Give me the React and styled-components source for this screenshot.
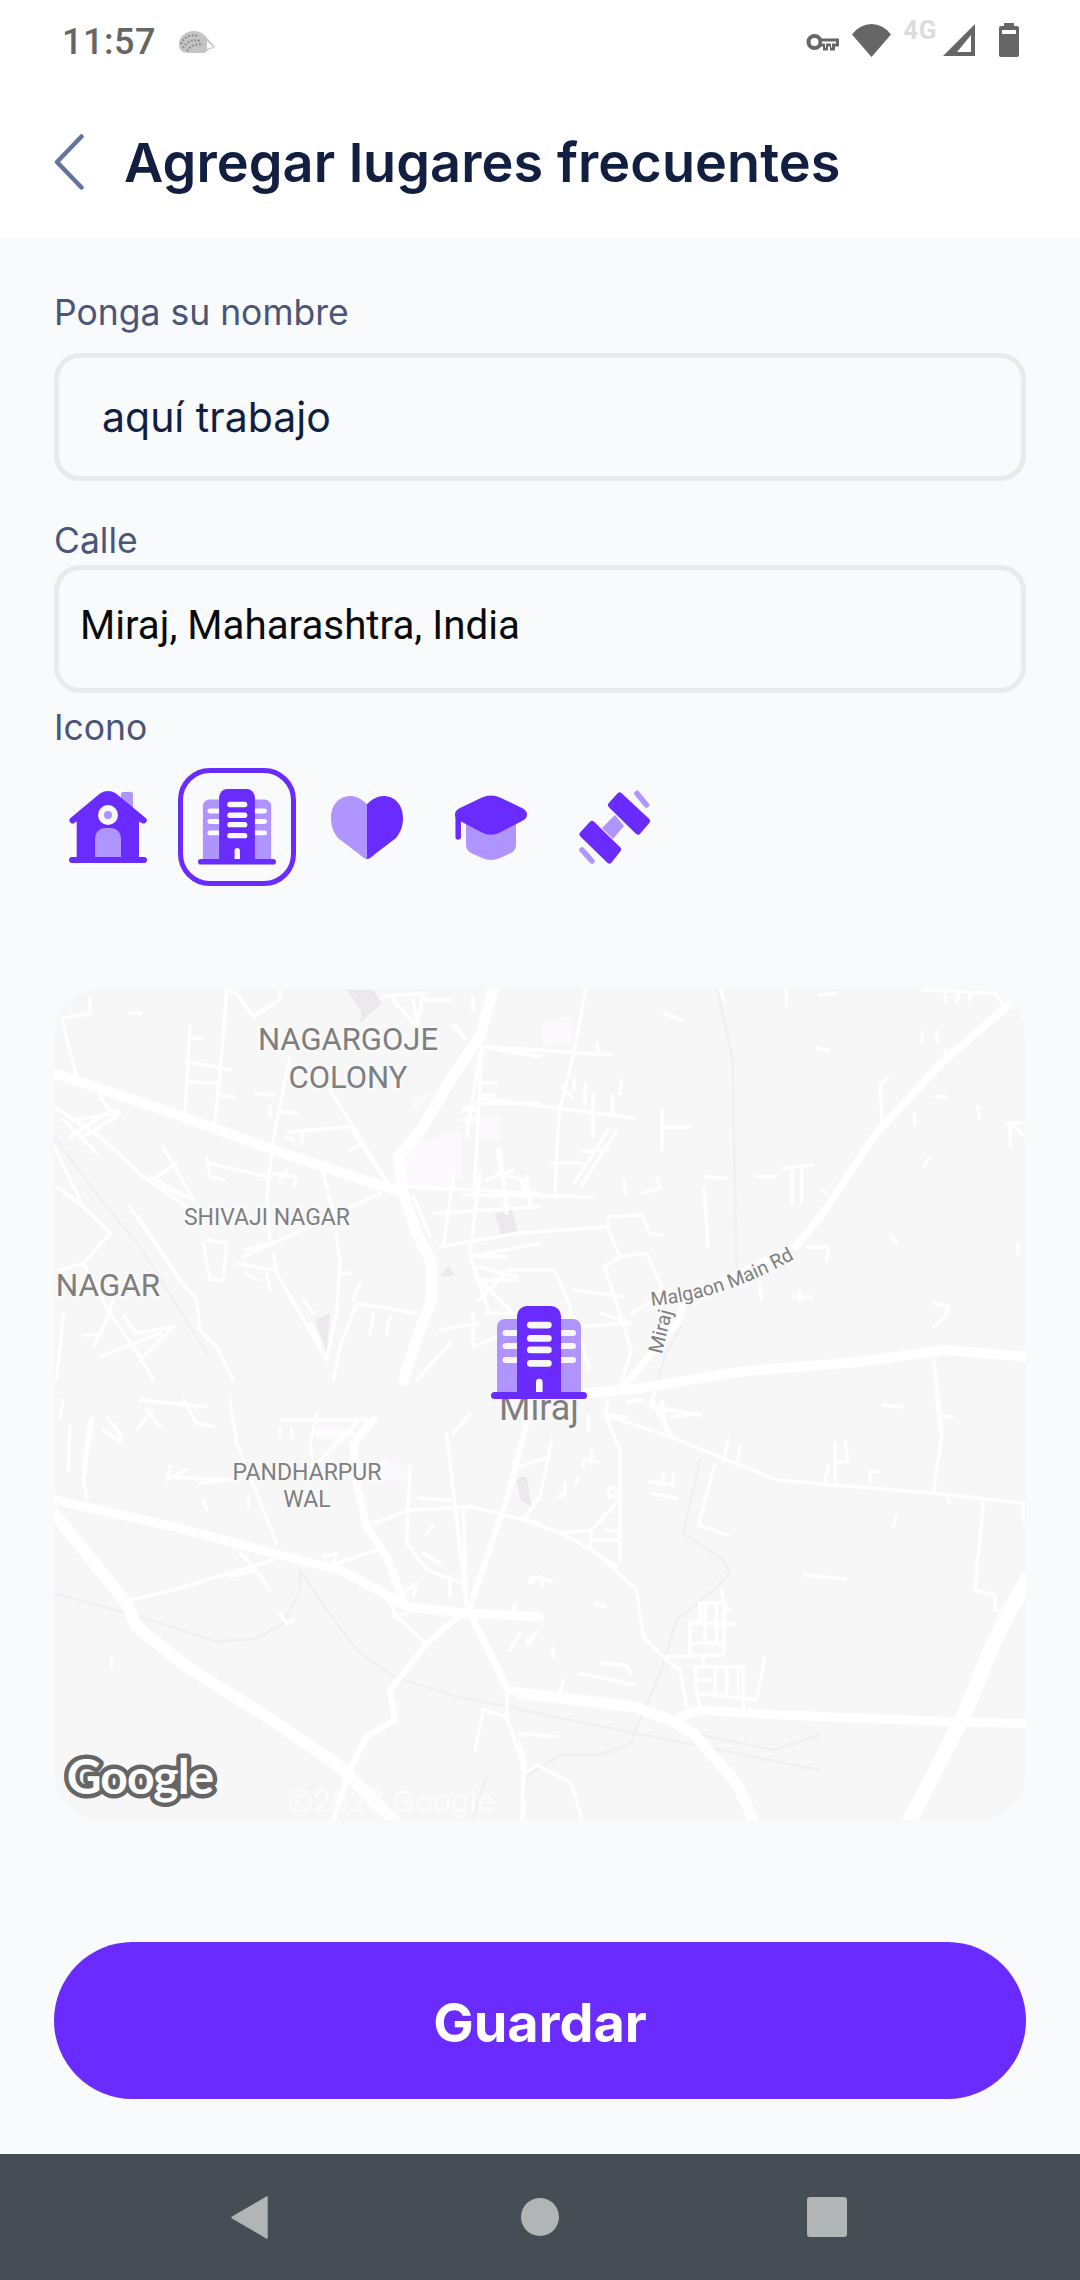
import React from "react";
import styled, { createGlobalStyle } from "styled-components";

const Global = createGlobalStyle`
  html, body { margin: 0; padding: 0; background: #f8fafc; }
  * { box-sizing: border-box; }
`;

const PURPLE = "#6a2bff";
const LIGHT = "#b094ff";
const WIN = "#f8fafc";

const Page = styled.div`
  width: 1080px; height: 2280px; display: flex; flex-direction: column; background: #f8fafc; overflow: hidden;
  font-family: Inter, "Noto Sans", sans-serif;
`;
const StatusBar = styled.div`
  height: 84px; background: #fff; display: flex; align-items: center; padding: 0 61px 0 62px; flex: none;
`;
const Time = styled.span`
  font: 500 36px Roboto, sans-serif; color: #666; width: 116px; letter-spacing: .5px;
`;
const StatusRight = styled.div`
  margin-left: auto; display: flex; align-items: center; padding-bottom: 4px;
`;
const Header = styled.header`
  height: 154px; flex: none; background: #fff; display: flex; align-items: center; padding: 2px 0 0 54px; gap: 40px;
`;
const Title = styled.h1`
  margin: 0; font: 600 54px Inter, sans-serif; color: #121f41; letter-spacing: .08px;
`;
const Body = styled.main`
  flex: 1; display: flex; flex-direction: column; padding: 54px 54px 55px;
`;
const Label = styled.label`
  display: block; font: 400 35.5px Inter, sans-serif; color: #4a5578; line-height: 42px;
  margin-top: ${p => p.$top || 0}px;
`;
const Field = styled.div`
  height: 128px; border: 5px solid #e8eaec; border-radius: 26px; display: flex; align-items: center;
  padding-left: ${p => p.$pad}px; padding-bottom: ${p => p.$road ? 8 : 0}px; margin-top: ${p => p.$top}px;
  font: ${p => p.$road ? '400 40.3px Roboto, sans-serif' : '400 41px Inter, sans-serif'};
  color: ${p => p.$road ? '#0a0a0a' : '#121f41'};
`;
const IconRow = styled.div`
  display: flex; align-items: center; margin-top: 19px; height: 118px; margin-left: -5px;
`;
const IconCell = styled.button`
  width: 118px; height: 118px; padding: 0; background: none; display: flex; align-items: center; justify-content: center;
  border: ${p => p.$on ? `5px solid ${PURPLE}` : '5px solid transparent'}; border-radius: 32px;
  margin-left: ${p => p.$left || 0}px;
`;
const MapFrame = styled.div`
  position: relative; height: 831px; margin-top: 103px; border-radius: 48px; overflow: hidden; background: #f7f7f8;
`;
const MapArt = styled.svg`
  display: block; width: 972px; height: 831px;
`;
const Pin = styled.div`
  position: absolute; left: 437px; top: 317px; display: flex;
`;
const SaveButton = styled.button`
  height: 157px; margin-top: 122px; border: 0; border-radius: 79px; background: ${PURPLE}; color: #fff;
  font: 700 54px Inter, sans-serif; flex: none; padding: 3px 0 0;
`;
const NavBar = styled.nav`
  height: 126px; flex: none; background: #464d54; display: flex; align-items: center; justify-content: center;
`;
const NavSlot = styled.div`
  width: 287px; display: flex; justify-content: center; padding-right: ${p => p.$shift || 0}px;
`;
const FourG = styled.span`
  font: 700 26px Roboto, sans-serif; color: #dcdcdc; align-self: flex-start; margin: -5px 6px 0 12px; line-height: 24px; letter-spacing: .5px;
`;
const Spacer = styled.div` width: ${p => p.$w}px; flex: none; `;

const Building = ({ w = 78, win = WIN }) => (
  <svg width={w} height={w * 93 / 96} viewBox="0 0 96 93">
    <path d="M6 87V21a8 8 0 0 1 8-8h68a8 8 0 0 1 8 8v66z" fill={LIGHT} />
    {[24, 37, 51].map(y => (
      <g key={y} fill={win}>
        <rect x="11.500" y={y} width="20" height="6" rx="3" />
        <rect x="65" y={y} width="20" height="6" rx="3" />
      </g>
    ))}
    <path d="M26 87V10A10 10 0 0 1 36 0h24a10 10 0 0 1 10 10v77z" fill={PURPLE} />
    {[15.7, 29, 40.5, 54].map(y => (
      <rect key={y} x="36" y={y} width="24.700" height="6.700" rx="3.300" fill={win} />
    ))}
    <path d="M45 86V76a3.300 3.300 0 0 1 6.600 0v10z" fill={win} />
    <rect x="0" y="86" width="96" height="7" rx="3.500" fill={PURPLE} />
  </svg>
);

const House = () => (
  <svg width="78" height="72" viewBox="0 0 78 72">
    <path d="M52 19V3a2 2 0 0 1 2-2h8a2 2 0 0 1 2 2v20z" fill={LIGHT} />
    <path d="M7.700 68V30.500L5 32.200a3.200 3.200 0 0 1-3.800-5L31 2.400q8-4.800 16 0l30 24.800a3.200 3.200 0 0 1-3.800 5L70 30.500V68z" fill={PURPLE} />
    <circle cx="39" cy="24" r="10" fill={WIN} />
    <circle cx="39" cy="24" r="4" fill={LIGHT} />
    <path d="M26 66V47a10 10 0 0 1 10-10h6a10 10 0 0 1 10 10v19z" fill={LIGHT} />
    <rect x="0" y="66" width="78" height="6" rx="3" fill={PURPLE} />
  </svg>
);

const Heart = () => (
  <svg width="72" height="63" viewBox="0 0 72 63">
    <path d="M36 8.300C31 3 25 0 19.600 0 8 0 0 9 0 22c0 9 3 15 7 20l21 16q5 5 8 5z" fill={LIGHT} />
    <path d="M36 8.300C41 3 47 0 52.400 0 64 0 72 9 72 22c0 9-3 15-7 20L44 58q-5 5-8 5z" fill={PURPLE} />
  </svg>
);

const Cap = () => (
  <svg width="72" height="65" viewBox="0 0 72 65">
    <path d="M11 25V50Q11 55 16 58L27 63Q36 67 45 63L56 58Q61 55 61 50V25z" fill={LIGHT} />
    <path d="M3.200 20v22" stroke={PURPLE} strokeWidth="5.500" strokeLinecap="round" />
    <path d="M27 2.500Q36-1.500 45 2.500L67 13Q72 15.500 72 19.500 72 23.500 67 26L45 37.500Q36 42 27 37.500L5 26Q0 23.500 0 19.500 0 15.500 5 13z" fill={PURPLE} />
  </svg>
);

const Dumbbell = () => (
  <svg width="72" height="75" viewBox="0 0 72 75">
    <polygon points="36,25 45,36 34,49 23,38" fill={LIGHT} />
    <polygon points="40.600,5.500 68,31 59,41.500 32,15" fill={PURPLE} stroke={PURPLE} strokeWidth="6" strokeLinejoin="round" />
    <polygon points="13,34 39,59.300 30.400,70.500 3.500,44.300" fill={PURPLE} stroke={PURPLE} strokeWidth="6" strokeLinejoin="round" />
    <path d="M58 3.500 67.500 15M3 60 13 71" stroke={LIGHT} strokeWidth="5.500" strokeLinecap="round" />
  </svg>
);

/* Each sheet traces one part of the map in its own coordinates; ox/oy/sx/sy place it on the page. */
const sheets = [
  {
    ox: 40, oy: 980, sx: 1 / 3, sy: 1 / 3,
    parcels: ["M1090 480L1250 470 1240 620 1080 620z", "M1110 360L1170 340 1130 400z"],
    blocks: ["M920 30L1000 30 1025 70 960 130 965 95z", "M1365 700L1415 690 1435 760 1385 770z", "M1200 890L1225 855 1245 885z", "M825 1020L870 1000 860 1120z"],
    grey: ["M42 470L200 680 300 800 500 1120"],
    big: [
      [10, "M42 280L400 400 700 510 1000 610 1070 630"],
      [11, "M1360 27L1320 170 1230 300 1150 440 1075 530 1090 640 1130 760 1175 850 1175 960 1140 1050 1090 1200"],
    ],
    mid: [
      "M720 30L720 60 640 110 590 40 555 30M560 30L550 170 530 380 525 430",
      "M450 135L435 400M450 175L490 175M440 245L575 270M440 305L540 310M530 345L580 350",
      "M65 115L150 100 150 50M65 115L110 290M270 100L300 100",
      "M750 230L700 480 680 650 690 780M650 340L700 345M690 380L690 410M720 395L770 400M750 455L930 440 1050 620M740 470L760 480M790 460L785 490M930 510L970 490M870 330L1050 620",
      "M180 350L210 390 240 395M50 385L180 470 310 590 440 680M100 420L240 400",
      "M70 420L170 520M90 470L200 400M130 470L230 410",
      "M370 500L420 590 460 660 330 590M350 590L410 550M370 620L430 650",
      "M500 530L510 590 550 600M510 550L680 590M700 580L770 590 760 620M740 570L720 600",
      "M850 580L880 700 900 850 890 1000 860 1140M1020 640L700 790 610 830M700 820L710 880 860 1140",
      "M42 500L130 680 210 760 130 850 60 870M130 680L50 620M130 850L210 1000 300 1130 340 1200",
      "M270 680L340 780 420 900 470 960 480 1050 530 1100 580 1200",
      "M500 780L560 790 550 900 510 900 490 790M620 810L680 790M590 850L700 870M620 880L650 900M680 880L690 930",
      "M220 960L200 1020 160 1100M360 1060L180 1130M70 1000L50 1200M130 1065L170 1065M250 1010L290 1060 400 1040 300 1140",
      "M950 970L900 1100 880 1200M950 970L1130 1000M1000 1000L990 1060M1050 1010L1040 1060M900 880L930 880M960 910L940 960",
      "M790 960L820 1000M810 1030L840 1090",
      "M1110 620L1500 640M1120 650L1170 770M1180 700L1500 680M1240 590L1210 800M1320 580L1290 820M1380 510L1400 700M1460 590L1470 680M1340 600L1420 570",
      "M1330 200L1500 230M1320 220L1280 470M1310 370L1500 370M1270 385L1300 385M1320 310L1370 310M1320 345L1360 345M1240 140L1270 170M1300 50L1300 90M1030 50L1150 40 1130 140 1060 60M1150 60L1230 60M1120 60L1130 130",
      "M1290 830L1500 790M1300 830L1400 830M1310 860L1430 890M1320 900L1420 1000 1500 1000M1300 1000L1300 1100 1400 1060 1500 1050M1230 1090L1130 1200",
    ],
  },
  {
    ox: 440, oy: 980, sx: 1 / 2.613, sy: 1 / 3,
    parcels: ["M270 120L345 110 345 190 270 200z", "M100 410L155 410 155 480 100 480z", "M0 460L55 460 55 590 0 600z"],
    blocks: [],
    grey: ["M725 30L765 240 770 600 775 880", "M630 1040L590 1120 570 1200"],
    big: [
      [8, "M1490 70L1310 250 1140 460 1000 700 930 800"],
      [7, "M930 800L780 880 640 960 620 1030"],
      [10, "M1530 1130L1320 1110 1100 1145 780 1175 520 1225 380 1240"],
      [7, "M620 1030L480 1220"],
    ],
    mid: [
      "M380 27L350 220 310 400 300 650M120 200L450 225M110 200L100 400 90 640M110 355L510 415M60 390L100 390M60 420L90 420M410 190L415 220M320 320L345 350M350 300L350 330M380 310L380 370M400 345L400 470M450 350L450 400M475 300L470 340M60 645L400 650",
      "M440 450L350 610M460 455L370 615M370 515L440 510M290 550L370 550M150 510L160 590M150 580L220 600M210 600L230 650",
      "M580 390L580 510M580 440L655 440M480 600L485 640M530 640L575 625 565 590",
      "M0 800L200 760 440 740 440 710 530 705 545 760 580 765M440 750L470 830 540 820 580 920 560 960 500 1000M470 830L430 860 500 1110 470 1220M350 1010L390 1170",
      "M690 590L745 595M690 620L700 800M825 590L875 590M895 565L970 555M920 570L920 670M945 570L945 670M1000 630L1010 640",
      "M1150 310L1155 430M1150 310L1170 295M1260 155L1260 190M1300 155L1300 190M985 205L1015 210M1295 350L1320 350M1405 380L1410 415M1240 400L1240 435M1280 530L1265 560M1180 770L1195 790M1510 790L1510 820M905 30L905 75M995 45L1035 40M585 100L630 120M735 30L740 60M1320 210L1320 240M1260 30L1450 40 1470 70M1320 40L1320 65M1355 40L1350 65M1385 40L1385 60",
      "M0 60L30 60M85 50L85 90M40 135L65 175M960 800L1015 800 1010 840M835 910L840 960M920 950L970 950M940 930L940 960M1290 970L1330 980 1320 1010 1290 1040M1160 1275L1205 1280M1290 1140L1310 1340M1310 1310L1340 1310M490 1265L530 1260M560 1240L550 1280 680 1305M580 1265L590 1350M605 1310L675 1300",
      "M1530 430L1480 430M1490 430L1490 500M1490 430L1530 470",
      "M80 830L130 1000M100 960L180 870 300 870 340 980 340 1010M95 900L200 900M120 1000L300 1000M100 1030L0 1050M350 930L480 950M350 1040L500 1030 420 1000",
    ],
  },
  {
    ox: 40, oy: 1400, sx: 1 / 3, sy: 1 / 3,
    parcels: ["M830 80L950 80 920 130 830 120z", "M1020 170L1100 200 1100 240 1030 240z"],
    blocks: ["M1430 240L1450 230 1470 310 1440 300z"],
    grey: ["M42 580L300 650 530 725 650 715 730 670 780 570 780 510", "M780 510L860 630 950 750 1060 830 1250 890 1500 940", "M1340 1130L1300 1250", "M1500 1100L1460 1130 1445 1260"],
    big: [
      [9, "M42 300L400 380 700 460 900 510 1050 590 1100 620 1280 640 1500 650"],
      [12, "M42 340L260 610 290 680 440 800 680 950 900 1100 1060 1260"],
      [8, "M1000 60L940 130 950 250 980 380 1040 470 1090 600"],
      [6, "M1470 30L1400 300 1290 620 1160 730 1050 870 1065 960 980 1010 930 1110 880 1260"],
      [7, "M1290 640L1380 820 1400 870 1500 880"],
    ],
    mid: [
      "M600 460L640 500M270 600L400 570 700 480M570 530L650 510 690 570",
      "M570 0L590 130 650 280 710 430",
      "M1000 370L1110 330 1290 320 1500 370M890 490L1010 450M850 470L890 460 880 490",
      "M1110 200L1100 430 1160 510 1270 550 1280 620M1135 295L1230 300M1270 320L1280 620M1220 100L1280 620M1240 100L1290 40",
      "M1160 400L1180 375M1150 460L1200 490M1100 570L1130 550 1120 590M1230 530L1230 590M1040 590L1070 650 1160 730M1060 650L1100 640",
      "M1400 870L1400 950 1450 1100 1450 1260M1330 930L1400 950M1330 930L1305 1050",
      "M830 40L810 130 820 200 950 70M820 100L940 100M725 60L1000 60",
      "M430 0L470 70 520 80M390 200L380 240 440 210M390 230L570 240 480 250",
      "M160 50L130 240 140 290M70 0L60 50M200 50L245 110 240 125 190 90M90 80L85 210M130 210L150 60",
      "M290 90L340 30M320 30L360 80M300 0L500 20",
      "M720 640L740 670 760 660M215 770L215 800M490 300L500 330M625 290L625 320M720 85L720 115M755 85L755 115",
      "M1500 530L1470 550M1425 610L1415 640M1410 750L1440 700M1460 730L1490 695",
    ],
  },
  {
    ox: 520, oy: 1400, sx: 1 / 3, sy: 1 / 3,
    parcels: [],
    blocks: ["M0 230L20 230 35 320 0 300z"],
    grey: ["M540 180L490 400 610 480 630 520 580 570 470 660 420 820 330 1030 240 1065 120 1065 20 1130", "M0 930L900 1110", "M520 1000L760 1050 900 1005"],
    big: [
      [11, "M0 880L340 920 450 960 520 1000 650 1150 700 1260"],
      [9, "M480 950L540 930 780 945 1300 965 1520 970"],
      [15, "M1520 540L1460 650 1420 730 1330 950 1170 1260"],
    ],
    mid: [
      "M255 45L300 150 300 480M255 45L450 110 770 240 1240 280 1510 310",
      "M255 45L320 50M265 0L255 45M395 0L450 100",
      "M300 300L215 390 125 400 10 360M125 400L230 460 350 570 370 710 440 780 480 810 500 920",
      "M215 390L210 440M225 420L295 420M265 260L300 270 300 290 265 290zM260 390L290 395M230 460L290 500",
      "M585 190L535 375 625 405M625 120L610 185M660 140L650 200M945 130L945 240M945 185L985 185 975 125M925 200L915 240M1050 215L1075 215M1050 215L1050 245",
      "M1250 0L1265 110 1240 280M1260 50L1295 50M1285 295L1290 310M1390 310L1365 570 1425 585 1425 630 1455 640M1510 310L1510 360",
      "M1130 345L1120 380M855 525L975 537M1090 15L1140 22",
      "M440 770L610 765 615 610 540 610 540 660 510 670 510 760M510 670L645 672M605 570L610 610 630 635M520 730L605 730M555 620L555 720M590 620L590 720M550 770L550 800",
      "M525 800L670 800 670 920M525 800L530 880 540 920M530 880L710 900 735 770M585 810L585 880M620 810L620 880M655 810L655 880M530 840L575 840",
      "M180 820L345 855M240 790L315 795 335 820",
      "M30 545L40 530 95 545M65 540L65 560M225 612L255 620M175 235L165 255M135 250L135 285 115 290M50 695L25 735M100 745L100 770M130 840L120 880M385 245L460 255 460 225M430 220L430 250M395 280L470 295M190 200L190 180 235 185M215 150L215 190",
      "M0 1000L110 1010M0 1030L15 1090 5 1260M15 1120L50 1095 155 1150 185 1260",
      "M95 120L85 170 0 200M85 170L60 290 10 360M205 50L205 90",
    ],
  },
];

const Stroke = ({ d, color, width }) => (
  <path d={d} stroke={color} strokeWidth={width} vectorEffect="non-scaling-stroke" />
);
const place = s => `translate(${s.ox} ${s.oy}) scale(${s.sx} ${s.sy})`;
const halo = { paintOrder: "stroke", stroke: "#f9f9fa", strokeWidth: 4, strokeLinejoin: "round" };

const MapDrawing = () => (
  <MapArt viewBox="54 989 972 831">
    <defs>
      <path id="malgaon" d="M650 1306Q722 1300 796 1258" />
    </defs>
    {sheets.map(s => (
      <g key={s.ox + "-" + s.oy} transform={place(s)}>
        {s.parcels.map(d => <path key={d} d={d} fill="#fbf9fb" />)}
        {s.blocks.map(d => <path key={d} d={d} fill="#ebe9ec" />)}
      </g>
    ))}
    <g fill="none" strokeLinecap="round" strokeLinejoin="round">
      {sheets.map(s => (
        <g key={s.ox + "-" + s.oy} transform={place(s)}>
          {s.grey.map(d => <Stroke key={d} d={d} color="#f1eff1" width={2.5} />)}
        </g>
      ))}
      {sheets.map(s => (
        <g key={s.ox + "-" + s.oy} transform={place(s)}>
          {s.mid.map(d => <Stroke key={d} d={d} color="#fff" width={3.5} />)}
        </g>
      ))}
      {sheets.map(s => (
        <g key={s.ox + "-" + s.oy} transform={place(s)}>
          {s.big.map(([w, d]) => <Stroke key={d} d={d} color="#fff" width={w} />)}
        </g>
      ))}
    </g>
    <g fontFamily="Roboto, sans-serif" fill="#7f7f7f" textAnchor="middle">
      <text x="348" y="1050" fontSize="31" style={halo}>NAGARGOJE</text>
      <text x="348" y="1088" fontSize="31" style={halo}>COLONY</text>
      <text x="267" y="1225" fontSize="23" style={halo}>SHIVAJI NAGAR</text>
      <text x="108" y="1296" fontSize="31.500" style={halo}>NAGAR</text>
      <text x="307" y="1480" fontSize="23" style={halo}>PANDHARPUR</text>
      <text x="307" y="1507" fontSize="23" style={halo}>WAL</text>
      <text x="539" y="1420" fontSize="36" style={halo}>Miraj</text>
      <text fontSize="19.500" style={halo}><textPath href="#malgaon" startOffset="50%">Malgaon Main Rd</textPath></text>
      <text x="667" y="1333" fontSize="20" transform="rotate(-76 667 1333)" style={halo}>Miraj</text>
      <text x="391" y="1812" fontSize="32" fill="#fcfcfd">©2023 Google</text>
      <text x="140" y="1794" fontSize="48" fontFamily="Lato, sans-serif" fontWeight="700" fill="#fff" stroke="#666" strokeWidth="9" strokeLinejoin="round" paintOrder="stroke" letterSpacing="-1">Google</text>
    </g>
  </MapArt>
);

const Hedgehog = () => (
  <svg width="38" height="24" viewBox="0 0 38 24">
    <path d="M1 13C2 5 9 1 16 1c6 0 10 3 13 7l8 9-7 3-3 3H10C4 23 0 19 1 13z" fill="#c4c4c4" />
    <path d="M3 14C6 7 12 4 20 6M5 18C9 11 15 9 23 11M9 21C13 15 19 13 25 15" fill="none" stroke="#8c8c8c" strokeWidth="2.200" strokeDasharray="1.800 1.800" />
    <path d="M29 11l6 6-6 2z" fill="#fff" />
  </svg>
);

export default function App() {
  return (
    <Page>
      <Global />
      <StatusBar>
        <Time>11:57</Time>
        <Hedgehog />
        <StatusRight>
          <svg width="33" height="21" viewBox="0 -3 33 21">
            <circle cx="8.500" cy="9" r="6" fill="none" stroke="#666" strokeWidth="4" />
            <path d="M14 5.500h19v8h-4v4h-5v-4h-2v4h-5v-4h-3z" fill="#666" />
            <path d="M16 8.500h14v2h-4v4h-1v-4h-5v4h-1v-4h-3z" fill="#fff" />
          </svg>
          <Spacer $w={13} />
          <svg width="39" height="33" viewBox="0 0 39 33">
            <path d="M19.500 33 0 10.500Q8 0 19.500 0T39 10.500z" fill="#666" />
          </svg>
          <FourG>4G</FourG>
          <svg width="32" height="32" viewBox="0 0 32 32">
            <path d="M32 0v32H0z" fill="#666" />
            <path d="M28 11v17H14z" fill="#fff" />
          </svg>
          <Spacer $w={24} />
          <svg width="20" height="34" viewBox="0 0 20 34">
            <path d="M5 0h10v3h3a2 2 0 0 1 2 2v27a2 2 0 0 1-2 2H2a2 2 0 0 1-2-2V5a2 2 0 0 1 2-2h3z" fill="#666" />
            <rect x="3" y="7" width="14" height="4" fill="#fff" />
          </svg>
        </StatusRight>
      </StatusBar>
      <Header>
        <svg width="30" height="56" viewBox="0 0 30 56">
          <path d="M27.500 2.500 3 28l24.500 25.500" fill="none" stroke="#64749c" strokeWidth="4.500" strokeLinecap="round" strokeLinejoin="round" />
        </svg>
        <Title>Agregar lugares frecuentes</Title>
      </Header>
      <Body>
        <Label>Ponga su nombre</Label>
        <Field $pad={43} $top={19}>aquí trabajo</Field>
        <Label $top={39}>Calle</Label>
        <Field $pad={21} $road $top={3}>Miraj, Maharashtra, India</Field>
        <Label $top={14}>Icono</Label>
        <IconRow>
          <IconCell><House /></IconCell>
          <IconCell $on $left={11}><Building /></IconCell>
          <IconCell $left={12}><Heart /></IconCell>
          <IconCell $left={6}><Cap /></IconCell>
          <IconCell $left={6}><Dumbbell /></IconCell>
        </IconRow>
        <MapFrame>
          <MapDrawing />
          <Pin><Building w={96} win="#f7f7f8" /></Pin>
        </MapFrame>
        <SaveButton>Guardar</SaveButton>
      </Body>
      <NavBar>
        <NavSlot $shift={8}>
          <svg width="37" height="43" viewBox="0 0 37 43"><path d="M36 1v41L1 21.500z" fill="#b1b5b6" stroke="#b1b5b6" strokeWidth="1.500" strokeLinejoin="round" /></svg>
        </NavSlot>
        <NavSlot>
          <svg width="38" height="40" viewBox="0 0 38 40"><circle cx="19" cy="20" r="19" fill="#b1b5b6" /></svg>
        </NavSlot>
        <NavSlot>
          <svg width="40" height="40" viewBox="0 0 40 40"><rect width="40" height="40" rx="3" fill="#b1b5b6" /></svg>
        </NavSlot>
      </NavBar>
    </Page>
  );
}
